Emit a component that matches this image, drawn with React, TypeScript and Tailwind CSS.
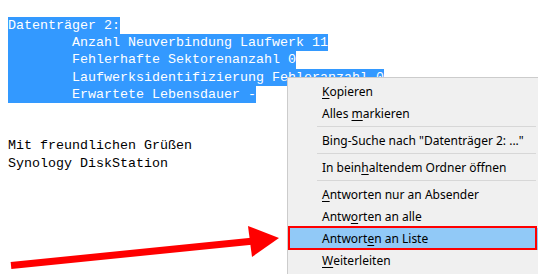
import React from "react";

const selLines = [
  "Datenträger 2:",
  "        Anzahl Neuverbindung Laufwerk 11",
  "        Fehlerhafte Sektorenanzahl 0",
  "        Laufwerksidentifizierung Fehleranzahl 0",
  "        Erwartete Lebensdauer -",
];

function U({ children }: { children: React.ReactNode }) {
  return <span className="underline underline-offset-2 decoration-1">{children}</span>;
}

function Item({ children }: { children: React.ReactNode }) {
  return (
    <div className="h-[22px] flex items-center pl-[34px] whitespace-pre">{children}</div>
  );
}

function Sep() {
  return (
    <div className="h-[5px] pt-[1px] pl-[29px] pr-[2px]">
      <div className="h-px bg-[#d7d7d7]" />
    </div>
  );
}

export default function App() {
  return (
    <div className="relative w-[538px] h-[274px] overflow-hidden bg-white">
      <div
        className="pt-[17px] pl-[8px] text-[13.33px] leading-[17.2px] text-black"
        style={{ fontFamily: '"Liberation Mono", monospace' }}
      >
        {selLines.map((l, i) => (
          <div key={i} className="w-fit h-[17.2px] whitespace-pre bg-[#3399ff] text-white">
            {l}
          </div>
        ))}
        <div className="h-[17.2px]" />
        <div className="h-[17.2px]" />
        <div className="whitespace-pre">Mit freundlichen Grüßen</div>
        <div className="whitespace-pre">Synology DiskStation</div>
      </div>

      <div
        className="absolute left-[287px] top-[77px] w-[252px] h-[210px] bg-[#f0f0f0] border border-[#cccccc] pt-[3px] text-[12px] text-black"
        style={{ fontFamily: '"Noto Sans", "Open Sans", sans-serif' }}
      >
        <Item>
          <U>K</U>opieren
        </Item>
        <Item>
          Alles <U>m</U>arkieren
        </Item>
        <Sep />
        <Item>Bing-Suche nach "Datenträger 2: ..."</Item>
        <Sep />
        <Item>
          In bein<U>h</U>altendem Ordner öffnen
        </Item>
        <Sep />
        <Item>
          <U>A</U>ntworten nur an Absender
        </Item>
        <Item>
          Antw<U>o</U>rten an alle
        </Item>
        <div className="relative h-[22px] flex items-center pl-[34px] bg-[#91c9f7] whitespace-pre">
          Antwort<U>e</U>n an Liste
          <div className="absolute -top-[2px] bottom-0 left-0 right-[1px] border-2 border-[#ff0000]" />
        </div>
        <Item>
          <U>W</U>eiterleiten
        </Item>
      </div>

      <svg
        className="absolute left-0 top-0 pointer-events-none"
        width="538"
        height="274"
        viewBox="0 0 538 274"
      >
        <line x1="11" y1="265.5" x2="254" y2="241" stroke="#ff0000" strokeWidth="7" />
        <polygon points="248,226 279,238 252,257" fill="#ff0000" />
      </svg>
    </div>
  );
}
